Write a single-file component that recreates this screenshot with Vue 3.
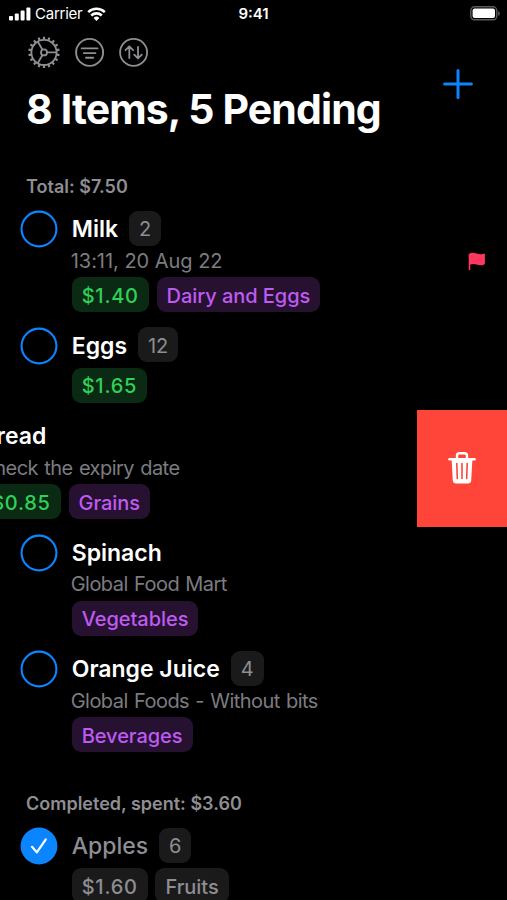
<script setup>
const pending = [
  { name: 'Milk', count: 2, note: '13:11, 20 Aug 22', dated: true, price: '$1.40', tag: 'Dairy and Eggs', flagged: true },
  { name: 'Eggs', count: 12, price: '$1.65' },
  { name: 'Bread', note: 'Check the expiry date', price: '$0.85', tag: 'Grains', swiped: true },
  { name: 'Spinach', note: 'Global Food Mart', tag: 'Vegetables' },
  { name: 'Orange Juice', count: 4, note: 'Global Foods - Without bits', tag: 'Beverages' },
]
const completed = [{ name: 'Apples', count: 6, price: '$1.60', tag: 'Fruits', done: true }]
const sections = [
  { title: 'Total: $7.50', items: pending },
  { title: 'Completed, spent: $3.60', items: completed },
]
const teeth = Array.from({ length: 18 }, (_, i) => i * 20)
</script>

<template>
  <main class="screen">
    <header class="status">
      <div class="carrier">
        <svg class="signal" width="22" height="14" viewBox="0 0 22 14" fill="#fff">
          <rect x="0" y="9" width="4" height="4.6" rx="1" />
          <rect x="5.8" y="6.4" width="4" height="7.2" rx="1" />
          <rect x="11.6" y="3.4" width="4" height="10.2" rx="1" />
          <rect x="17.4" y="0.4" width="4" height="13.2" rx="1" />
        </svg>
        <span class="carrier-name">Carrier</span>
        <svg width="19" height="14" viewBox="0 0 19 14" fill="none" stroke="#fff" stroke-width="2.6">
          <path d="M1.2 5.1a12 12 0 0 1 16.6 0" />
          <path d="M4.2 8.5a7.7 7.7 0 0 1 10.6 0" />
          <path d="M9.5 13.9 6.6 11a4.2 4.2 0 0 1 5.8 0z" fill="#fff" stroke="none" />
        </svg>
      </div>
      <span class="time">9:41</span>
      <svg class="battery" width="31" height="15" viewBox="0 0 31 15">
        <rect x="0.8" y="0.8" width="26" height="13" rx="3.8" fill="none" stroke="#5c5c5e" stroke-width="1.4" />
        <rect x="2.6" y="2.6" width="22.4" height="9.4" rx="2" fill="#fff" />
        <path d="M28.2 5.2c2.2.7 2.2 3.9 0 4.6z" fill="#5c5c5e" />
      </svg>
    </header>

    <div class="top">
      <div class="heading">
        <nav class="tools">
          <svg width="32" height="32" viewBox="-16 -16.4 32 32" fill="none" stroke="#8e8e93" stroke-width="1.8">
            <circle r="12.6" />
            <path v-for="a in teeth" :key="a" d="M13 0h2.7" stroke-width="2.2" :transform="`rotate(${a + 10})`" />
            <circle r="3" />
            <path d="M3 0H12.6M-1.5-2.6-6.3-10.9M-1.5 2.6-6.3 10.9" />
          </svg>
          <svg width="32" height="32" viewBox="-16.6 -16.4 32 32" fill="none" stroke="#8e8e93" stroke-width="1.9" stroke-linecap="round">
            <circle r="13.5" />
            <path d="M-7.9-4H7.9M-5.8 .7H5.8M-3.6 5.3H3.6" />
          </svg>
          <svg width="32" height="32" viewBox="-15.6 -16.4 32 32" fill="none" stroke="#8e8e93" stroke-width="1.8" stroke-linecap="round" stroke-linejoin="round">
            <circle r="13.5" />
            <path d="M-4.3 5.6V-6M-8.1-2.2-4.3-6-.5-2.2M4.4-5.6V6M.6 2.2 4.4 6 8.2 2.2" />
          </svg>
        </nav>
        <h1>8 Items, 5 Pending</h1>
      </div>
      <svg class="add" width="30" height="30" viewBox="0 0 30 30" stroke="#0a84ff" stroke-width="3" stroke-linecap="round">
        <path d="M15 1.6V28.4M1.6 15H28.4" />
      </svg>
    </div>

    <section v-for="section in sections" :key="section.title">
      <h2>{{ section.title }}</h2>
      <div v-for="item in section.items" :key="item.name" class="row" :class="{ swiped: item.swiped, done: item.done }">
        <div class="content">
          <svg class="check" width="38" height="38" viewBox="0 0 38 38" fill="none">
            <circle v-if="!item.done" cx="19" cy="19" r="17.4" stroke="#0a84ff" stroke-width="2.1" />
            <template v-else>
              <circle cx="19" cy="19" r="18.4" fill="#0a84ff" />
              <path d="M12 19.8 16.8 25.4 25.8 12.4" stroke="#fff" stroke-width="2.2" stroke-linecap="round" stroke-linejoin="round" />
            </template>
          </svg>
          <div class="body">
            <div class="title">
              <span class="name">{{ item.name }}</span>
              <span v-if="item.count" class="pill count">{{ item.count }}</span>
            </div>
            <div v-if="item.note" class="note" :class="{ dated: item.dated }">{{ item.note }}</div>
            <div class="tags" :class="{ spaced: !item.note }">
              <span v-if="item.price" class="pill price">{{ item.price }}</span>
              <span v-if="item.tag" class="pill tag">{{ item.tag }}</span>
            </div>
          </div>
          <svg v-if="item.flagged" class="flag" width="18" height="19" viewBox="0 0 18 19" fill="#ff375f">
            <path d="M.7 2.2C3.5.2 6 .6 8.5 1.5 11 2.5 13.5 2.5 15.6 1.7 16.3 1.4 16.9 1.7 16.9 2.5V11.3C16.9 12 16.6 12.4 16 12.7 13.5 13.7 11 13.5 8.5 12.6 6.2 11.8 4.3 11.8 2.3 12.5V17.4A.8.8 0 0 1 .7 17.4Z" />
          </svg>
        </div>
        <div v-if="item.swiped" class="delete">
          <svg width="28" height="34" viewBox="0 0 28 34" fill="none" stroke="#fff" stroke-linecap="round" stroke-linejoin="round">
            <path d="M1.5 8.3H26.5" stroke-width="2.5" />
            <path d="M9 8V4.8Q9 2.3 11.5 2.3H16.5Q19 2.3 19 4.8V8" stroke-width="2.4" />
            <path d="M3.6 8.5H24.4L23.2 29.2Q23 32.5 19.8 32.5H8.2Q5 32.5 4.8 29.2Z" fill="#fff" stroke="none" />
            <path d="M8.8 12.5 9.3 27.5M14 12.5V27.5M19.2 12.5 18.7 27.5" stroke="#ff453a" stroke-width="1.6" />
          </svg>
        </div>
      </div>
    </section>
  </main>
</template>

<style>
body {
  background: #000;
}
</style>

<style scoped>
.screen {
  width: 507px;
  height: 900px;
  overflow: hidden;
  background: #000;
  color: #fff;
  font-family: Inter, 'Liberation Sans', sans-serif;
}
.status {
  display: grid;
  grid-template-columns: 1fr auto 1fr;
  align-items: center;
  height: 27px;
  padding: 0 6px 0 9px;
}
.carrier {
  display: flex;
  align-items: center;
}
.carrier-name {
  margin: 0 5px 0 4px;
  font-size: 15px;
  letter-spacing: -0.25px;
}
.time {
  margin-left: -3px;
  font-size: 15px;
  font-weight: 600;
}
.battery {
  justify-self: end;
}
.top {
  display: flex;
  justify-content: space-between;
  height: 146px;
  padding: 9px 34px 0 26px;
  box-sizing: border-box;
}
.tools {
  display: flex;
  gap: 12.9px;
  margin-left: 1.9px;
}
h1 {
  margin: 16px 0 0;
  font-size: 41px;
  line-height: 50px;
  font-weight: 700;
  letter-spacing: -0.87px;
  white-space: nowrap;
}
.add {
  margin-top: 33px;
}
h2 {
  margin: 0;
  padding: 3px 26px 0;
  height: 30.4px;
  box-sizing: border-box;
  font-size: 18px;
  line-height: 22px;
  font-weight: 600;
  color: #8e8e93;
}
section + section h2 {
  margin-top: 30px;
}
.row {
  display: flex;
  overflow: hidden;
}
.content {
  display: flex;
  flex: none;
  width: 507px;
  padding: 7.5px 21px 7.5px 20px;
  box-sizing: border-box;
}
.swiped .content {
  margin-left: -90.5px;
}
.check {
  flex: none;
  margin: -0.8px 14px 0 -0.3px;
}
.body {
  flex: 1;
}
.title {
  display: flex;
  align-items: center;
  gap: 11px;
  height: 35px;
}
.name {
  padding-top: 2px;
  font-size: 23px;
  font-weight: 600;
}
.pill {
  display: flex;
  align-items: center;
  height: 35px;
  padding: 2px 10px 0;
  border-radius: 9px;
  box-sizing: border-box;
  font-size: 20px;
  font-weight: 500;
  white-space: nowrap;
}
.count {
  padding: 2px 9.9px 0;
  background: #1a1a1b;
  color: #8e8e93;
  font-weight: 400;
}
.note {
  height: 31.5px;
  margin: 0 1px 0 -1px;
  font-size: 20px;
  line-height: 31px;
  letter-spacing: -0.53px;
  word-spacing: 1.1px;
  color: #7c7c80;
}
.note.dated {
  letter-spacing: -0.03px;
  word-spacing: 0;
}
.tags {
  display: flex;
  gap: 7.8px;
}
.tags.spaced {
  margin-top: 5.5px;
}
.price {
  background: #0a2a13;
  color: #30d158;
  letter-spacing: 0.74px;
}
.tag {
  background: #261130;
  color: #bf5af2;
  letter-spacing: -0.05px;
}
.flag {
  align-self: center;
}
.done .name {
  color: #8e8e93;
  font-weight: 500;
}
.done .pill {
  background: #1a1a1b;
  color: #8e8e93;
}
.delete {
  display: flex;
  flex: none;
  align-items: center;
  justify-content: center;
  width: 90.5px;
  padding-bottom: 1px;
  box-sizing: border-box;
  background: #ff453a;
}
</style>
